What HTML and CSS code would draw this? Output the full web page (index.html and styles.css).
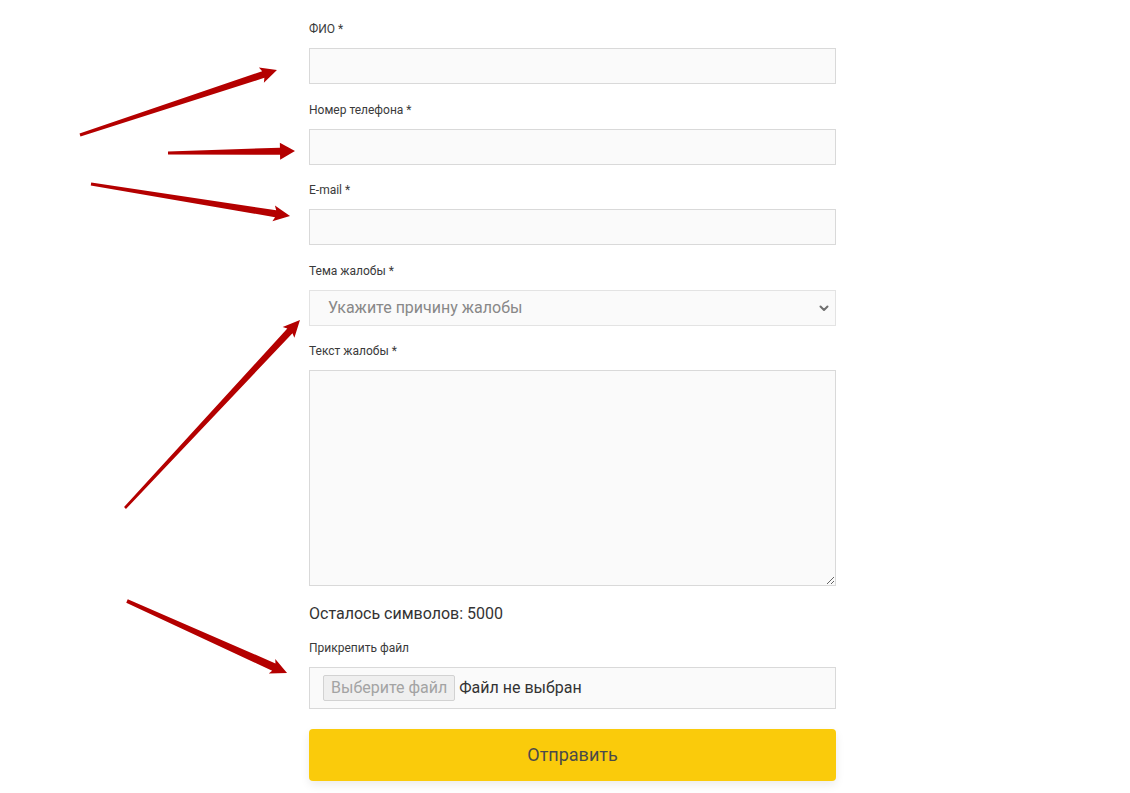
FILE: index.html
```html
<!DOCTYPE html>
<html lang="ru">
<head>
<meta charset="utf-8">
<title>Жалоба</title>
<link rel="stylesheet" href="styles.css">
</head>
<body>
<div class="page">
  <form class="form">
    <div class="group">
      <label class="label">ФИО *</label>
      <input class="field" type="text">
    </div>
    <div class="group">
      <label class="label">Номер телефона *</label>
      <input class="field" type="text">
    </div>
    <div class="group">
      <label class="label">E-mail *</label>
      <input class="field" type="text">
    </div>
    <div class="group">
      <label class="label">Тема жалобы *</label>
      <div class="select-wrap">
        <select class="field select">
          <option>Укажите причину жалобы</option>
        </select>
        <svg class="chevron" width="10" height="7" viewBox="0 0 10 7"><path d="M1.5 1.5 L5 5 L8.5 1.5" fill="none" stroke="#6f6f6f" stroke-width="2" stroke-linecap="round" stroke-linejoin="round"/></svg>
      </div>
    </div>
    <div class="group">
      <label class="label">Текст жалобы *</label>
      <textarea class="field area"></textarea>
    </div>
    <div class="counter">Осталось символов: 5000</div>
    <div class="group">
      <label class="label">Прикрепить файл</label>
      <div class="file">
        <span class="file-btn">Выберите файл</span>
        <span class="file-text">Файл не выбран</span>
      </div>
    </div>
    <button class="submit" type="button">Отправить</button>
  </form>
  <svg class="arrows" width="1130" height="793" viewBox="0 0 1130 793">
    <g fill="#b40000">
      <polygon transform="translate(80 135) rotate(-18.26)" points="0,-1.5 193,-3.5 191,-8 207.4,0 191,8 193,3.5 0,1.5"/>
      <polygon transform="translate(168 153) rotate(-0.9)" points="0,-1.5 112,-3.5 112,-8.5 127,0 112,8.5 112,3.5 0,1.5"/>
      <polygon transform="translate(91 184) rotate(9.14)" points="0,-1.5 187,-3.5 185,-8 201.6,0 185,8 187,3.5 0,1.5"/>
      <polygon transform="translate(125 508) rotate(-47.05)" points="0,-1.3 242,-3.5 240,-8 256.8,0 240,8 242,3.5 0,1.3"/>
      <polygon transform="translate(127 601) rotate(24.23)" points="0,-1.8 161,-4 159,-8 175.5,0 159,8 161,4 0,1.8"/>
    </g>
  </svg>
</div>
</body>
</html>
```

FILE: styles.css
```css
* { box-sizing: border-box; }
html, body { margin: 0; padding: 0; background: #fff; }
body {
  font-family: Roboto, "Liberation Sans", Arial, sans-serif;
  color: #333;
}
.page {
  position: relative;
  width: 1130px;
  height: 793px;
  overflow: hidden;
}
.form {
  width: 527px;
  margin-left: 309px;
  padding-top: 19px;
  display: flex;
  flex-direction: column;
}
.group {
  display: flex;
  flex-direction: column;
  margin-bottom: 15.6px;
}
.label {
  font-size: 12px;
  line-height: 20px;
  color: #3a3a3a;
  margin-bottom: 9px;
}
.field {
  width: 100%;
  height: 36px;
  border: 1px solid #d9d9d9;
  background: #fafafa;
  border-radius: 0;
  font-family: inherit;
  font-size: 16px;
  color: #333;
  outline: none;
  margin: 0;
}
.select-wrap { position: relative; }
.select {
  appearance: none;
  -webkit-appearance: none;
  padding: 0 40px 0 18px;
  color: #888;
  border-color: #e3e3e3;
}
.chevron {
  position: absolute;
  right: 7px;
  top: 15px;
  pointer-events: none;
}
.area {
  height: 216px;
  resize: vertical;
  padding: 8px 12px;
  display: block;
}
.counter {
  font-size: 16px;
  line-height: 20px;
  color: #333;
  margin-top: -14px;
  margin-bottom: 14px;
  padding-top: 16px;
}
.file {
  height: 42px;
  border: 1px solid #d9d9d9;
  background: #fafafa;
  display: flex;
  align-items: center;
  padding: 0 13px;
  gap: 4px;
}
.file-btn {
  font-size: 16px;
  color: #a3a3a3;
  background: #efefef;
  border: 1px solid #d2d2d2;
  border-radius: 2px;
  height: 26px;
  line-height: 24px;
  padding: 0 7px;
}
.file-text {
  font-size: 16px;
  color: #333;
}
.submit {
  margin-top: 4px;
  height: 52px;
  width: 100%;
  border: none;
  border-radius: 4px;
  background: #facb0b;
  color: #4a4a4a;
  font-family: inherit;
  font-size: 18px;
  box-shadow: 0 4px 10px rgba(0,0,0,0.08);
}
.arrows {
  position: absolute;
  left: 0;
  top: 0;
  pointer-events: none;
}
```
